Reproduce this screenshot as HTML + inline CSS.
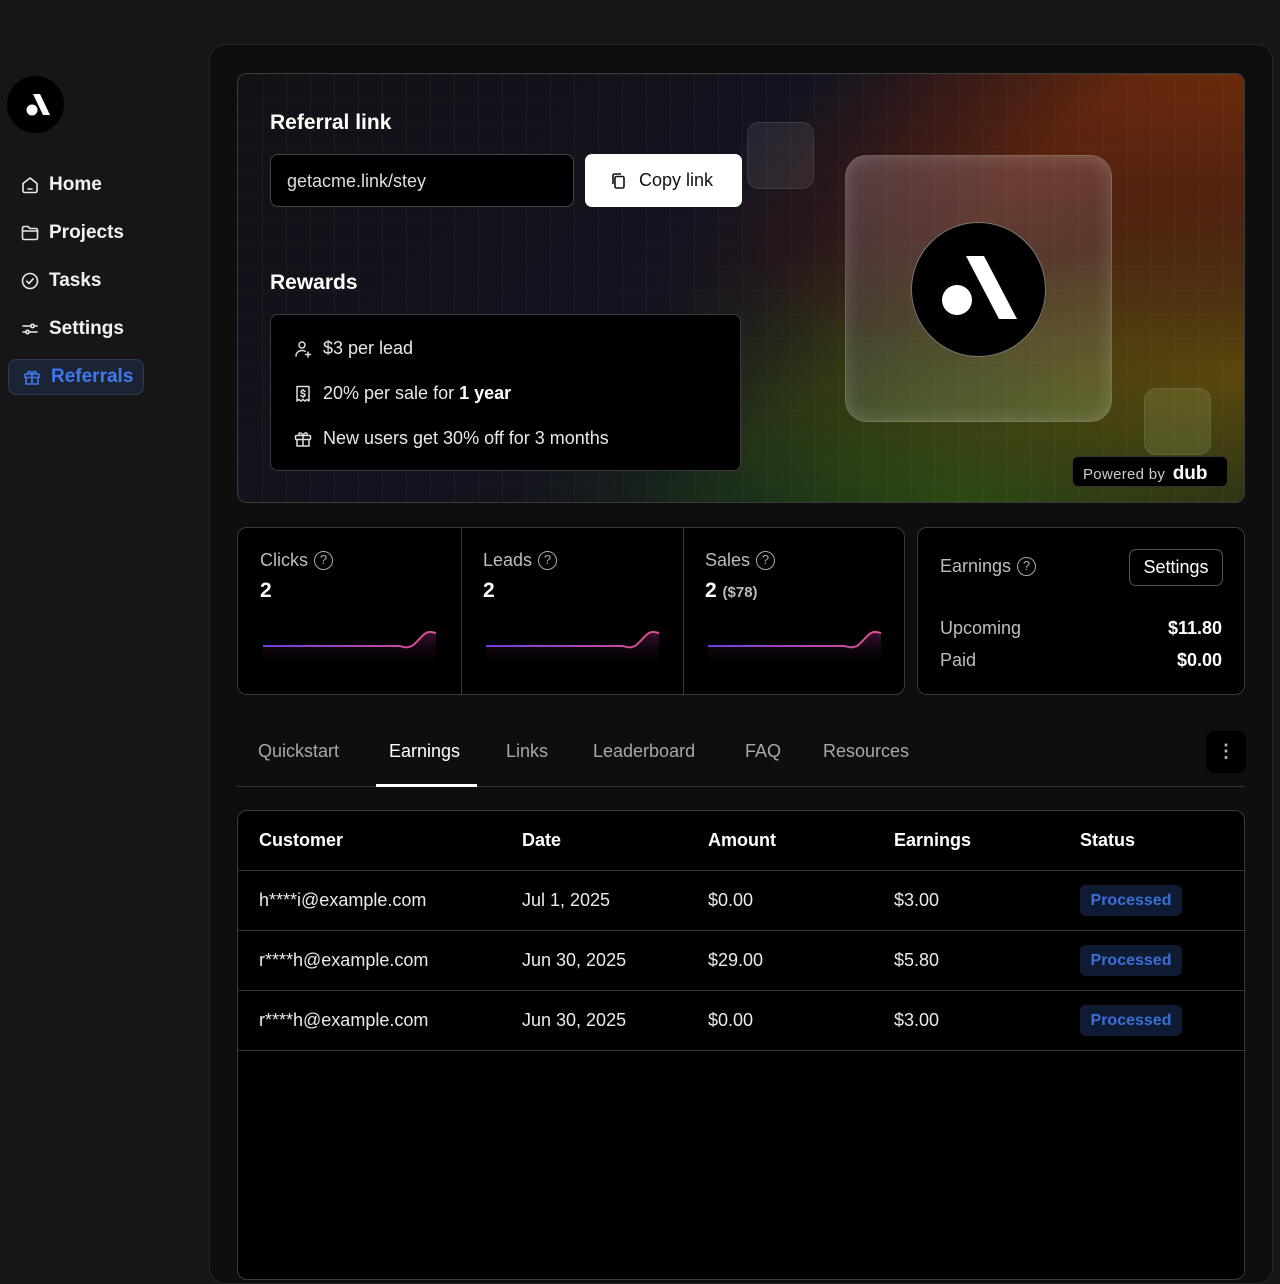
<!DOCTYPE html>
<html><head><meta charset="utf-8"><style>
*{box-sizing:border-box;margin:0;padding:0}
body{width:1280px;height:1264px;background:#161616;font-family:"Liberation Sans",sans-serif;color:#fff;position:relative;overflow:hidden}
.abs{position:absolute}
.nav{position:absolute;left:8px;height:36px;width:136px;display:flex;align-items:center;gap:9px;padding-left:12px;font-size:19px;font-weight:bold;color:#f2f2f2}
.nav svg{width:20px;height:20px;fill:none;stroke:#e8e8e8;stroke-width:1.6;stroke-linecap:round;stroke-linejoin:round}
.panel{left:209px;top:44px;width:1064px;height:1240px;background:#0e0e0e;border:1px solid #262626;border-radius:16px}
.hero{left:237px;top:73px;width:1008px;height:430px;border:1px solid #3a3a3a;border-radius:10px;overflow:hidden;
background:
linear-gradient(rgba(255,255,255,.025) 1px,transparent 1px) 0 0/24px 24px,
linear-gradient(90deg,rgba(255,255,255,.025) 1px,transparent 1px) 0 0/24px 24px,
linear-gradient(135deg,#121216 0%,#131320 40%,transparent 62%),
radial-gradient(ellipse at 100% 0%,#6a2a0c 0%,transparent 55%),
radial-gradient(ellipse at 100% 70%,#5a4a0c 0%,transparent 45%),
radial-gradient(ellipse at 72% 100%,#1f4a16 0%,transparent 45%),
radial-gradient(ellipse at 70% 0%,#4a1512 0%,transparent 50%),
#15151c}
.h2{font-size:21px;font-weight:bold}
.card{background:#000;border:1px solid #3a3a3a;border-radius:8px}
.rw{display:flex;align-items:center;gap:10px;font-size:18px;color:#e8e8e8;position:absolute;left:22px}
.rw svg{width:20px;height:20px;fill:none;stroke:#ddd;stroke-width:1.5;stroke-linecap:round;stroke-linejoin:round}
.stat{position:absolute;top:0;height:167px;width:223px;padding:22px}
.stat .l{font-size:18px;color:#bdbdbd;display:flex;align-items:center;gap:6px}
.q{display:inline-block;width:19px;height:19px;border:1.5px solid #aaa;border-radius:50%;font-size:13px;text-align:center;line-height:16px;color:#aaa}
.stat .v{font-size:21px;font-weight:bold;margin-top:8px}
.tab{position:absolute;top:741px;font-size:18px;color:#a8a8a8}
.th{position:absolute;font-size:18px;font-weight:bold}
.td{position:absolute;font-size:18px;color:#eaeaea}
.badge{position:absolute;left:842px;width:102px;height:31px;background:#0f1a33;border-radius:6px;color:#3b6fd8;font-size:16px;font-weight:bold;text-align:center;line-height:31px}
.row{position:absolute;left:0;width:1008px;height:1px;background:#333}
</style></head><body>
<div class="abs" style="left:7px;top:76px;width:57px;height:57px;border-radius:50%;background:#000"></div>
<svg class="abs" style="left:7px;top:76px" width="57" height="57" viewBox="0 0 57 57"><circle cx="25" cy="34" r="5.5" fill="#fff"/><polygon points="26,18 33,18 43,39 36,39" fill="#fff"/></svg>

<div class="nav" style="top:167px"><svg viewBox="0 0 20 20"><path d="M3 8.5L10 3l7 5.5V16a1.5 1.5 0 0 1-1.5 1.5h-11A1.5 1.5 0 0 1 3 16z"/><path d="M8 14h4"/></svg>Home</div>
<div class="nav" style="top:215px"><svg viewBox="0 0 20 20"><path d="M2.5 5a1.5 1.5 0 0 1 1.5-1.5h4l2 2h6a1.5 1.5 0 0 1 1.5 1.5v8a1.5 1.5 0 0 1-1.5 1.5H4A1.5 1.5 0 0 1 2.5 15z"/><path d="M2.5 8h15"/></svg>Projects</div>
<div class="nav" style="top:263px"><svg viewBox="0 0 20 20"><circle cx="10" cy="10" r="7.5"/><path d="M6.8 10.2l2.2 2.2 4.2-4.6"/></svg>Tasks</div>
<div class="nav" style="top:311px"><svg viewBox="0 0 20 20"><path d="M3 7h8M14 7h3M3 13h3M9 13h8"/><circle cx="12.5" cy="7" r="1.7"/><circle cx="7.5" cy="13" r="1.7"/></svg>Settings</div>
<div class="nav" style="top:359px;background:#1c2433;border:1px solid #2e3a52;border-radius:8px;color:#3d78f0;padding-left:13px"><svg viewBox="0 0 20 20" style="stroke:#3d78f0"><rect x="3" y="7" width="14" height="3.5" rx=".8"/><path d="M4 10.5V17h12v-6.5M10 7v10M10 7C8 3 5 4 6.5 7M10 7c2-4 5-3 3.5 0"/></svg>Referrals</div>

<div class="abs panel"></div>
<div class="abs hero">
  <div class="abs h2" style="left:32px;top:37px">Referral link</div>
  <div class="abs card" style="left:32px;top:80px;width:304px;height:53px;border-color:#444;font-size:18px;color:#ddd;padding:16px 16px">getacme.link/stey</div>
  <div class="abs" style="left:347px;top:80px;width:157px;height:53px;background:#fff;border-radius:7px;color:#111;font-size:18px;display:flex;align-items:center;gap:10px;padding-left:24px"><svg width="20" height="20" viewBox="0 0 20 20" fill="none" stroke="#111" stroke-width="1.6"><rect x="6" y="5.5" width="9" height="11.5" rx="1.5"/><path d="M4 13V4.5A1.5 1.5 0 0 1 5.5 3H12"/></svg>Copy link</div>
  <div class="abs h2" style="left:32px;top:197px">Rewards</div>
  <div class="abs card" style="left:32px;top:240px;width:471px;height:157px">
    <div class="rw" style="top:23px"><svg viewBox="0 0 20 20"><circle cx="9" cy="6" r="3"/><path d="M3 17c0-3.5 3-5.5 6-5.5 1.2 0 2.3.3 3.2.8M15 13v5M12.5 15.5h5"/></svg>$3 per lead</div>
    <div class="rw" style="top:68px"><svg viewBox="0 0 20 20"><path d="M4 2.5h12V17l-2-1.5-2 1.5-2-1.5-2 1.5-2-1.5L4 17z"/><path d="M12 7.5c-.5-.8-1.2-1-2-1-1 0-2 .5-2 1.4 0 2 4 1 4 3 0 1-1 1.5-2 1.5-.9 0-1.7-.3-2.1-1M10 5.5v1M10 12.5v1"/></svg><span>20% per sale for <b style="color:#fff">1 year</b></span></div>
    <div class="rw" style="top:113px"><svg viewBox="0 0 20 20"><rect x="2.5" y="6.5" width="15" height="4" rx=".8"/><path d="M4 10.5V17h12v-6.5M10 6.5V17M10 6.5C8 2.5 4.5 3.5 6.5 6.5M10 6.5c2-4 5.5-3 3.5 0"/></svg>New users get 30% off for 3 months</div>
  </div>
  <div class="abs" style="left:509px;top:48px;width:67px;height:67px;border-radius:12px;background:rgba(255,255,255,.08);border:1px solid rgba(255,255,255,.08)"></div>
  <div class="abs" style="left:607px;top:81px;width:267px;height:267px;border-radius:22px;background:linear-gradient(160deg,rgba(210,170,170,.28),rgba(160,160,200,.15) 50%,rgba(180,220,150,.22));border:1px solid rgba(255,255,255,.18);box-shadow:inset 0 0 18px rgba(255,255,255,.18)"></div>
  <div class="abs" style="left:673px;top:148px;width:135px;height:135px;border-radius:50%;background:#000;border:1px solid #777"></div>
  <svg class="abs" style="left:673px;top:148px" width="135" height="135" viewBox="0 0 135 135"><circle cx="46" cy="78" r="15" fill="#fff"/><polygon points="55,34 73,34 106,97 88,97" fill="#fff"/></svg>
  <div class="abs" style="left:906px;top:314px;width:67px;height:67px;border-radius:12px;background:rgba(200,230,150,.14);border:1px solid rgba(255,255,255,.08)"></div>
  <div class="abs" style="left:834px;top:382px;width:156px;height:31px;background:#000;border-radius:6px;border:1px solid #333;font-size:15px;color:#ccc;padding:6px 10px;letter-spacing:.3px">Powered by <b style="color:#fff;font-size:19px;letter-spacing:0;margin-left:3px">dub</b></div>
</div>

<div class="abs card" style="left:237px;top:527px;width:668px;height:168px;border-radius:10px">
  <div class="stat" style="left:0"><div class="l">Clicks <span class="q">?</span></div><div class="v">2</div></div>
  <div class="abs" style="left:223px;top:0;width:1px;height:166px;background:#3a3a3a"></div>
  <div class="stat" style="left:223px"><div class="l">Leads <span class="q">?</span></div><div class="v">2</div></div>
  <div class="abs" style="left:445px;top:0;width:1px;height:166px;background:#3a3a3a"></div>
  <div class="stat" style="left:445px"><div class="l">Sales <span class="q">?</span></div><div class="v">2 <span style="font-size:15px;color:#bbb;font-weight:bold">($78)</span></div></div>
  <svg class="abs" style="left:0;top:0" width="668" height="168">
    <defs><linearGradient id="s" x1="0" x2="1"><stop offset="0" stop-color="#6a3fe0"/><stop offset="1" stop-color="#e0508a"/></linearGradient>
    <linearGradient id="f" x1="0" y1="0" x2="0" y2="1"><stop offset="0" stop-color="#4a1540" stop-opacity=".8"/><stop offset="1" stop-color="#000" stop-opacity="0"/></linearGradient></defs>
    <g id="sp"><path d="M25 118H160C165 118 167 121 174 118 182 112 186 103 193 104L198 105V140H25Z" fill="url(#f)"/><path d="M25 118H160C165 118 167 121 174 118 182 112 186 103 193 104L198 105" fill="none" stroke="url(#s)" stroke-width="2"/></g>
    <use href="#sp" x="223"/><use href="#sp" x="445"/>
  </svg>
</div>
<div class="abs card" style="left:917px;top:527px;width:328px;height:168px;border-radius:10px">
  <div class="abs" style="left:22px;top:28px;font-size:18px;color:#bdbdbd;display:flex;gap:6px;align-items:center">Earnings <span class="q">?</span></div>
  <div class="abs" style="left:211px;top:21px;width:94px;height:37px;border:1px solid #555;border-radius:7px;font-size:18px;text-align:center;line-height:35px">Settings</div>
  <div class="abs" style="left:22px;top:90px;font-size:18px;color:#bdbdbd">Upcoming</div>
  <div class="abs" style="right:22px;top:90px;font-size:18px;font-weight:bold">$11.80</div>
  <div class="abs" style="left:22px;top:122px;font-size:18px;color:#bdbdbd">Paid</div>
  <div class="abs" style="right:22px;top:122px;font-size:18px;font-weight:bold">$0.00</div>
</div>

<div class="tab" style="left:258px">Quickstart</div>
<div class="tab" style="left:389px;color:#fff">Earnings</div>
<div class="tab" style="left:506px">Links</div>
<div class="tab" style="left:593px">Leaderboard</div>
<div class="tab" style="left:745px">FAQ</div>
<div class="tab" style="left:823px">Resources</div>
<div class="abs" style="left:237px;top:786px;width:1008px;height:1px;background:#333"></div>
<div class="abs" style="left:376px;top:784px;width:101px;height:3px;background:#fff"></div>
<div class="abs" style="left:1206px;top:731px;width:40px;height:42px;background:#000;border-radius:8px;text-align:center;color:#bbb;font-size:18px;line-height:40px;font-weight:bold">⋮</div>

<div class="abs card" style="left:237px;top:810px;width:1008px;height:470px;border-radius:10px">
  <div class="th" style="left:21px;top:19px">Customer</div><div class="th" style="left:284px;top:19px">Date</div><div class="th" style="left:470px;top:19px">Amount</div><div class="th" style="left:656px;top:19px">Earnings</div><div class="th" style="left:842px;top:19px">Status</div>
  <div class="row" style="top:59px"></div>
  <div class="td" style="left:21px;top:79px">h****i@example.com</div><div class="td" style="left:284px;top:79px">Jul 1, 2025</div><div class="td" style="left:470px;top:79px">$0.00</div><div class="td" style="left:656px;top:79px">$3.00</div><div class="badge" style="top:74px">Processed</div>
  <div class="row" style="top:119px"></div>
  <div class="td" style="left:21px;top:139px">r****h@example.com</div><div class="td" style="left:284px;top:139px">Jun 30, 2025</div><div class="td" style="left:470px;top:139px">$29.00</div><div class="td" style="left:656px;top:139px">$5.80</div><div class="badge" style="top:134px">Processed</div>
  <div class="row" style="top:179px"></div>
  <div class="td" style="left:21px;top:199px">r****h@example.com</div><div class="td" style="left:284px;top:199px">Jun 30, 2025</div><div class="td" style="left:470px;top:199px">$0.00</div><div class="td" style="left:656px;top:199px">$3.00</div><div class="badge" style="top:194px">Processed</div>
  <div class="row" style="top:239px"></div>
</div>
</body></html>
